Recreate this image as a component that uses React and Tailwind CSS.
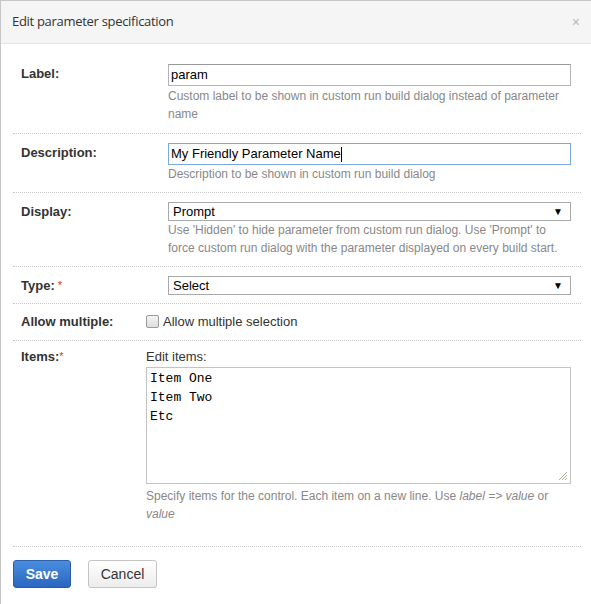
import React from 'react';

const Row = ({ label, required, starGap = true, labelWidth = 'w-[147px]', children, className = '' }) => (
  <div className={`flex border-b border-dotted border-[#c8c8c8] pl-2 pr-[10px] ${className}`}>
    <div className={`${labelWidth} shrink-0 font-bold text-[13px] text-[#333] leading-[19px]`}>
      {label}
      {required && <span className={`text-[#d33] font-normal text-[11px] align-top ${starGap ? 'ml-[3px]' : ''}`}>*</span>}
    </div>
    <div className="flex-1 min-w-0">{children}</div>
  </div>
);

const Help = ({ children }) => (
  <div className="text-[12px] leading-[18px] text-[#888]">{children}</div>
);

const Select = ({ value }) => (
  <div className="h-[19px] border border-[#a9a9a9] bg-white flex items-center justify-between pl-[4px] pr-[7px] text-[13px] text-black">
    <span>{value}</span>
    <span className="text-[10px] leading-none">▼</span>
  </div>
);

export default function App() {
  return (
    <div className="w-[591px] h-[604px] bg-white border-l border-t border-[#c6c6c6] overflow-hidden font-['Liberation_Sans',Arial,sans-serif]">
      {/* header */}
      <div className="h-[43px] bg-[#f5f5f5] border-b border-[#e4e4e4] flex items-center justify-between pl-[11px] pr-[11px]">
        <span className="font-['Open_Sans',sans-serif] text-[13px] tracking-[-0.3px] text-[#333]">Edit parameter specification</span>
        <span className="text-[#b8b8b8] text-[14px] leading-none">×</span>
      </div>

      <div className="pl-[12px] pr-[10px] pt-[11px]">
        <Row label="Label:" className="pt-[9px] pb-[10px]">
          <div className="h-[22px] border border-[#b4b4b4] border-t-[#999] bg-white px-[2px] text-[13px] text-black leading-[20px]">param</div>
          <div className="pt-px">
            <Help>Custom label to be shown in custom run build dialog instead of parameter name</Help>
          </div>
        </Row>

        <Row label="Description:" className="pt-[9px] pb-[9px]">
          <div className="h-[22px] border border-[#7ea6e0] bg-white px-[2px] text-[13px] text-black leading-[20px] flex items-center">
            <span>My Friendly Parameter Name</span>
            <span className="w-px h-[15px] bg-black"></span>
          </div>
          <Help>Description to be shown in custom run build dialog</Help>
        </Row>

        <Row label="Display:" className="pt-[9px] pb-[9px]">
          <Select value="Prompt" />
          <Help>Use 'Hidden' to hide parameter from custom run dialog. Use 'Prompt' to force custom run dialog with the parameter displayed on every build start.</Help>
        </Row>

        <Row label="Type:" required className="pt-[9px] pb-[8px]">
          <Select value="Select" />
        </Row>

        <Row label="Allow multiple:" labelWidth="w-[125px]" className="pt-[8px] pb-[9px]">
          <label className="flex items-center gap-[4px] text-[13px] text-[#333] leading-[19px]">
            <span className="w-[13px] h-[13px] border border-[#9a9a9a] rounded-[2px] bg-gradient-to-b from-[#f4f4f4] to-[#dedede]"></span>
            <span>Allow multiple selection</span>
          </label>
        </Row>

        <Row label="Items:" required starGap={false} labelWidth="w-[125px]" className="pt-[6px] pb-[23px]">
          <div className="text-[13px] text-[#333] leading-[19px] mb-px">Edit items:</div>
          <div className="relative h-[117px] border border-[#c4c4c4] bg-white px-[3px] py-[1px] font-['Liberation_Mono','Courier_New',monospace] text-[13px] leading-[19px] text-black">
            <div>Item One</div>
            <div>Item Two</div>
            <div>Etc</div>
            <svg className="absolute right-[2px] bottom-[2px]" width="11" height="11" viewBox="0 0 11 11">
              <path d="M10 2 L2 10 M10 5 L5 10 M10 8 L8 10" stroke="#b0b0a0" strokeWidth="1" />
            </svg>
          </div>
          <div className="pt-[3px]">
            <Help>
              Specify items for the control. Each item on a new line. Use <i>label =&gt; value</i> or <i>value</i>
            </Help>
          </div>
        </Row>

        <div className="flex gap-[17px] pt-[13px]">
          <button className="h-[28px] w-[58px] rounded-[3px] border border-[#2c5ea8] bg-gradient-to-b from-[#4a8ee0] to-[#2a66bf] text-white font-bold text-[14px]">Save</button>
          <button className="h-[28px] w-[69px] rounded-[3px] border border-[#c4c4c4] bg-gradient-to-b from-white to-[#ececec] text-[#333] text-[14px]">Cancel</button>
        </div>
      </div>
    </div>
  );
}
